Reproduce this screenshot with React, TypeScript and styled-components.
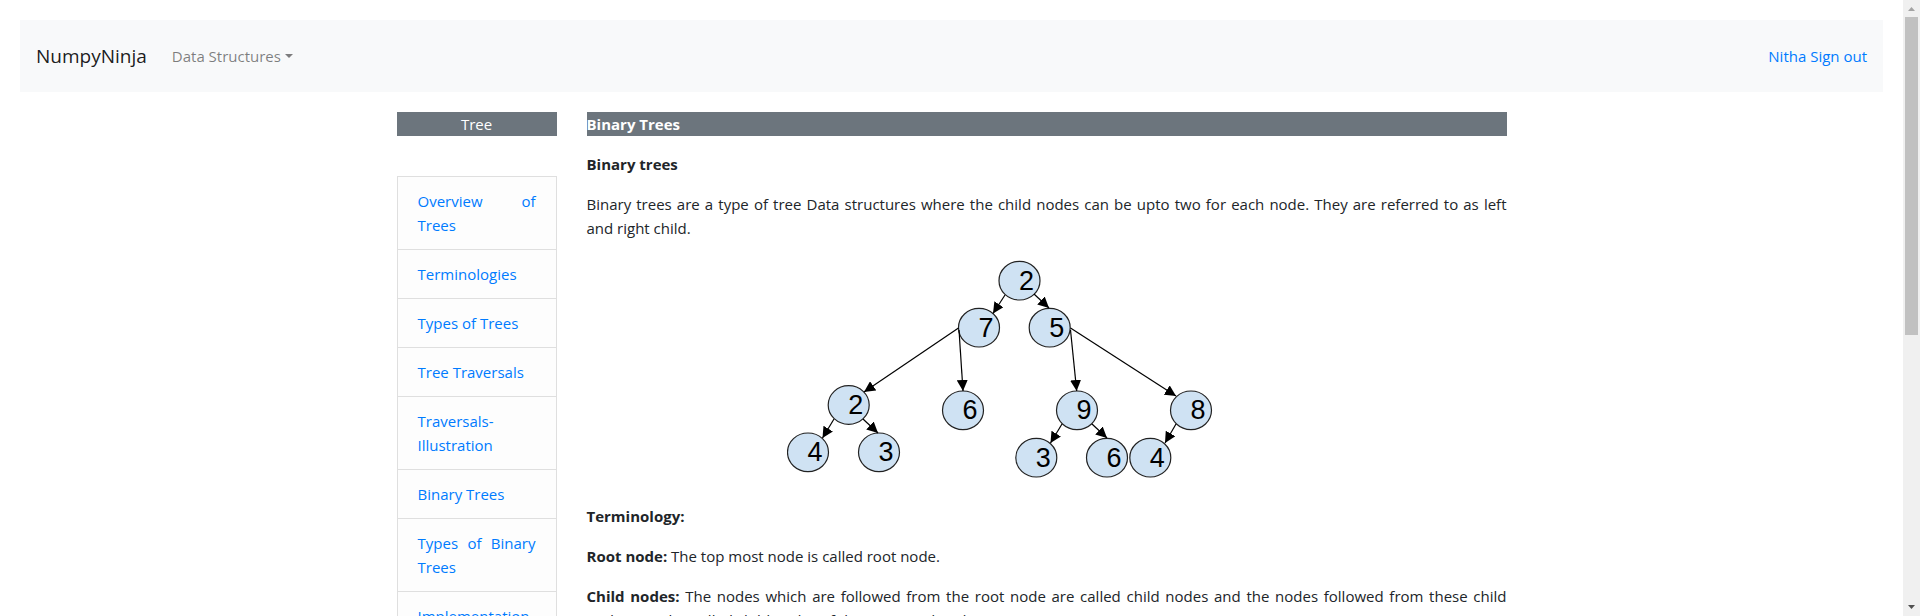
import React from "react";
import styled, { createGlobalStyle } from "styled-components";

const GlobalStyle = createGlobalStyle`
  *, *::before, *::after { box-sizing: border-box; }
  body {
    margin: 0;
    background: #fff;
    color: #212529;
    font-family: "Segoe UI", "Open Sans", sans-serif;
    font-size: 15px;
    line-height: 24px;
    overflow: hidden;
  }
  a { color: #007bff; text-decoration: none; }
`;

const Window = styled.div`
  display: flex;
  height: 100vh;
`;

const Page = styled.div`
  flex: 1;
  min-width: 0;
  padding: 20px;
  overflow: hidden;
`;

const Navbar = styled.nav`
  display: flex;
  align-items: center;
  height: 72px;
  padding: 0 16px;
  background: #f8f9fa;
`;

const Brand = styled.a`
  margin-right: 25px;
  color: rgba(0, 0, 0, 0.9);
  font-size: 19px;
`;

const Dropdown = styled.button`
  display: flex;
  align-items: center;
  gap: 4px;
  margin-right: auto;
  padding: 0;
  border: 0;
  background: none;
  color: rgba(0, 0, 0, 0.5);
  font: inherit;

  &::after {
    content: "";
    border: 4px solid transparent;
    border-top-color: currentColor;
    border-bottom: 0;
  }
`;

const Container = styled.div`
  display: grid;
  grid-template-columns: 160px minmax(0, 1fr);
  column-gap: 30px;
  align-items: start;
  max-width: 1110px;
  margin: 20px auto 0;
  text-align: justify;
`;

const Heading = styled.h2<{ $centered?: boolean }>`
  margin: 0;
  background: #6c757d;
  color: #fff;
  font-size: 15px;
  font-weight: ${(p) => (p.$centered ? 400 : 700)};
  text-align: ${(p) => (p.$centered ? "center" : "left")};
`;

const TopicList = styled.ul`
  margin: 40px 0 0;
  padding: 0;
  list-style: none;
  border: 1px solid #dfdfdf;
  background: #fdfdfd;
`;

const Topic = styled.li`
  padding: 12px 20px;

  & + & { border-top: 1px solid #dfdfdf; }
`;

const Paragraph = styled.p`
  margin: 16px 0 0;
`;

const Figure = styled.figure`
  display: flex;
  justify-content: center;
  margin: 16px 0 0;
`;

const ScrollTrack = styled.div`
  display: flex;
  flex-direction: column;
  align-items: center;
  flex: 0 0 17px;
  background: #f0f0f0;
`;

const ScrollThumb = styled.div`
  width: 13px;
  height: 318px;
  margin-bottom: auto;
  background: #c1c1c1;
`;

const topics = [
  "Overview of Trees",
  "Terminologies",
  "Types of Trees",
  "Tree Traversals",
  "Traversals-Illustration",
  "Binary Trees",
  "Types of Binary Trees",
  "Implementation of Binary Trees",
];

const nodes: [string, number, number][] = [
  ["2", 232.5, 24.7],
  ["7", 192, 71.7],
  ["5", 262.7, 71.7],
  ["2", 61.7, 149],
  ["6", 176, 154.3],
  ["9", 290, 154.3],
  ["8", 404, 154.3],
  ["4", 21, 196.3],
  ["3", 92, 196.3],
  ["3", 249.3, 201.7],
  ["6", 320, 201.7],
  ["4", 363.3, 201.7],
];

const edges: [number, number, number, number][] = [
  [218, 39, 206, 57.5],
  [247, 38, 262, 52],
  [171.5, 72, 77, 136],
  [172, 74, 176, 135],
  [283.5, 72, 389, 140],
  [283.5, 74, 289.7, 135],
  [47, 163, 35.5, 182],
  [76, 163, 91, 177],
  [275, 168, 263.5, 187],
  [305, 168, 320, 182],
  [389, 168, 378, 187],
];

const BinaryTree = () => (
  <svg width="520" height="232" viewBox="0 0 520 232" role="img" aria-label="Binary tree">
    <defs>
      <marker id="head" viewBox="0 0 11 11" refX="11" refY="5.5" markerWidth="11" markerHeight="11" markerUnits="userSpaceOnUse" orient="auto">
        <path d="M0 0 11 5.5 0 11z" />
      </marker>
    </defs>
    {nodes.map(([label, x, y], i) => (
      <g key={i}>
        <ellipse cx={x} cy={y} rx="20.5" ry="19.3" fill="#cfe2f3" stroke="#222" strokeWidth="1.2" />
        <text x={x + 7} y={y + 9} textAnchor="middle" fontFamily="Arial, 'Liberation Sans', sans-serif" fontSize="27">
          {label}
        </text>
      </g>
    ))}
    {edges.map(([x1, y1, x2, y2], i) => (
      <line key={i} x1={x1} y1={y1} x2={x2} y2={y2} stroke="#000" strokeWidth="1.2" markerEnd="url(#head)" />
    ))}
  </svg>
);

export default function App() {
  return (
    <Window>
      <GlobalStyle />
      <Page>
        <Navbar>
          <Brand href="#">NumpyNinja</Brand>
          <Dropdown type="button">Data Structures</Dropdown>
          <a href="#">Nitha Sign out</a>
        </Navbar>
        <Container>
          <aside>
            <Heading $centered>Tree</Heading>
            <TopicList>
              {topics.map((t) => (
                <Topic key={t}>
                  <a href="#">{t}</a>
                </Topic>
              ))}
            </TopicList>
          </aside>
          <main>
            <Heading>Binary Trees</Heading>
            <Paragraph><strong>Binary trees</strong></Paragraph>
            <Paragraph>
              Binary trees are a type of tree Data structures where the child nodes can be upto two for each node. They
              are referred to as left and right child.
            </Paragraph>
            <Figure><BinaryTree /></Figure>
            <Paragraph><strong>Terminology:</strong></Paragraph>
            <Paragraph><strong>Root node:</strong> The top most node is called root node.</Paragraph>
            <Paragraph>
              <strong>Child nodes:</strong> The nodes which are followed from the root node are called child nodes and
              the nodes followed from these child nodes are also called child nodes of the respected node.
            </Paragraph>
          </main>
        </Container>
      </Page>
      <ScrollTrack aria-hidden="true">
        <svg width="17" height="17"><path d="M5 11h7L8.500 7z" fill="#a3a3a3" /></svg>
        <ScrollThumb />
        <svg width="17" height="17"><path d="M5 6h7L8.500 10z" fill="#505050" /></svg>
      </ScrollTrack>
    </Window>
  );
}
